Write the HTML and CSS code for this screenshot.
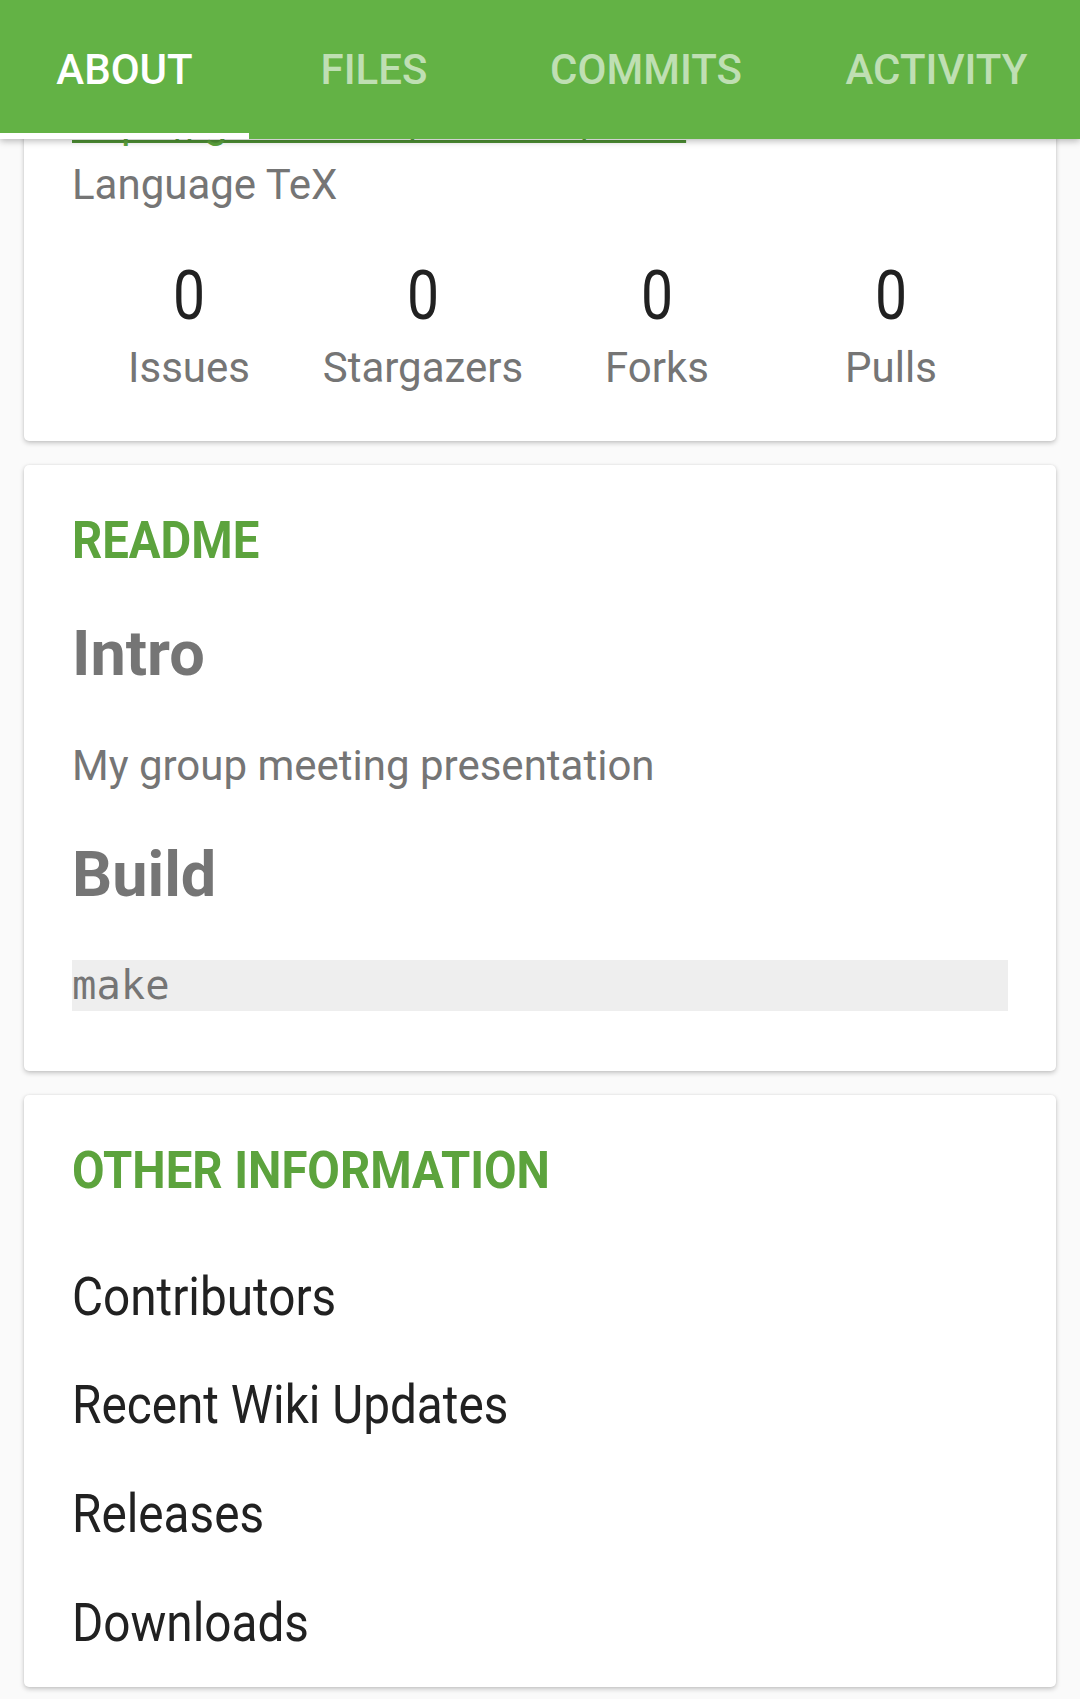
FILE: index.html
```html
<!DOCTYPE html>
<html lang="en">
<head>
<meta charset="utf-8">
<title>Repository — About</title>
<link rel="stylesheet" href="styles.css">
</head>
<body>
<nav class="tabbar">
  <a class="tab tab-active">ABOUT</a>
  <a class="tab">FILES</a>
  <a class="tab">COMMITS</a>
  <a class="tab">ACTIVITY</a>
</nav>
<main class="content">
  <section class="card card-overview">
    <a class="repo-link">https://github.com/ekinders/talks</a>
    <p class="language">Language TeX</p>
    <div class="stats">
      <div class="stat"><span class="stat-num">0</span><span class="stat-label">Issues</span></div>
      <div class="stat"><span class="stat-num">0</span><span class="stat-label">Stargazers</span></div>
      <div class="stat"><span class="stat-num">0</span><span class="stat-label">Forks</span></div>
      <div class="stat"><span class="stat-num">0</span><span class="stat-label">Pulls</span></div>
    </div>
  </section>
  <section class="card card-readme">
    <h2 class="card-title"><span class="condensed">README</span></h2>
    <div class="readme">
      <h1 class="readme-h">Intro</h1>
      <p class="readme-p">My group meeting presentation</p>
      <h1 class="readme-h readme-h-build">Build</h1>
      <pre class="readme-code"><code>make</code></pre>
    </div>
  </section>
  <section class="card card-info">
    <h2 class="card-title"><span class="condensed">OTHER INFORMATION</span></h2>
    <ul class="info-list">
      <li class="info-item"><span class="condensed">Contributors</span></li>
      <li class="info-item"><span class="condensed">Recent Wiki Updates</span></li>
      <li class="info-item"><span class="condensed">Releases</span></li>
      <li class="info-item"><span class="condensed">Downloads</span></li>
    </ul>
  </section>
</main>
</body>
</html>
```

FILE: styles.css
```css
* { box-sizing: border-box; }

html, body {
  margin: 0;
  padding: 0;
}

body {
  position: relative;
  width: 1080px;
  height: 1699px;
  overflow: hidden;
  background: #fafafa;
  font-family: Roboto, "Noto Sans", sans-serif;
}

/* ---------- Tab bar (overlays scrolled content) ---------- */
.tabbar {
  position: absolute;
  top: 0;
  left: 0;
  right: 0;
  z-index: 2;
  height: 139px;
  display: grid;
  grid-template-columns: 249px 250px 294px 287px;
  background: #63b245;
  box-shadow: 0 2px 7px rgba(0, 0, 0, 0.28);
}

.tab {
  position: relative;
  display: block;
  text-align: center;
  font-size: 42px;
  font-weight: 500;
  line-height: 139px;
  color: rgba(255, 255, 255, 0.6);
}

.tab-active { color: #ffffff; }

.tab-active::after {
  content: "";
  position: absolute;
  left: 0;
  right: 0;
  bottom: 0;
  height: 6px;
  background: #ffffff;
}

/* ---------- Content ---------- */
.content {
  display: flex;
  flex-direction: column;
  gap: 24px;
  padding: 54px 24px 0;
}

.card {
  background: #ffffff;
  border-radius: 5px;
  box-shadow: 0 2px 5px rgba(0, 0, 0, 0.22), 0 0 2px rgba(0, 0, 0, 0.08);
  padding: 44px 48px 0;
}

.condensed {
  display: inline-block;
  transform: scaleX(0.9);
  transform-origin: left center;
  white-space: nowrap;
}

/* overview card */
.card-overview { padding-bottom: 49px; }

.repo-link {
  display: block;
  font-size: 42px;
  line-height: 49px;
  color: #5ca33d;
  text-decoration: underline;
  text-decoration-color: #4e9134;
  text-decoration-thickness: 3px;
  text-underline-offset: 3px;
  text-decoration-skip-ink: none;
  white-space: nowrap;
  letter-spacing: -0.5px;
}

.language {
  margin: 13px 0 0;
  font-size: 42px;
  line-height: 49px;
  color: #757575;
}

.stats {
  margin-top: 47px;
  display: grid;
  grid-template-columns: repeat(4, 1fr);
}

.stat {
  display: flex;
  flex-direction: column;
  align-items: center;
}

.stat-num {
  display: inline-block;
  font-size: 68px;
  line-height: 80px;
  color: #212121;
  transform: scaleX(0.84);
}

.stat-label {
  margin-top: 7px;
  font-size: 42px;
  line-height: 49px;
  color: #757575;
}

/* card titles */
.card-title {
  margin: 0;
  font-size: 52.5px;
  font-weight: 700;
  line-height: 62px;
  color: #5ca33d;
}

/* readme */
.card-readme { padding-bottom: 60px; }

.readme-h {
  margin: 46px 0 0;
  font-size: 63px;
  font-weight: 700;
  line-height: 74px;
  color: #757575;
}

.readme-h-build { margin-top: 48px; }

.readme-p {
  margin: 50px 0 0;
  font-size: 42px;
  line-height: 49px;
  color: #757575;
}

.readme-code {
  margin: 48px 0 0;
  height: 51px;
  padding: 0;
  background: #eeeeee;
  font-family: "DejaVu Sans Mono", "Liberation Mono", monospace;
  font-size: 40.5px;
  line-height: 51px;
  color: #757575;
}

/* other information */
.card-info { padding-bottom: 9.5px; }

.info-list {
  list-style: none;
  margin: 41.7px 0 0;
  padding: 0;
}

.info-item {
  font-size: 53px;
  line-height: 108.7px;
  color: #212121;
}
```
